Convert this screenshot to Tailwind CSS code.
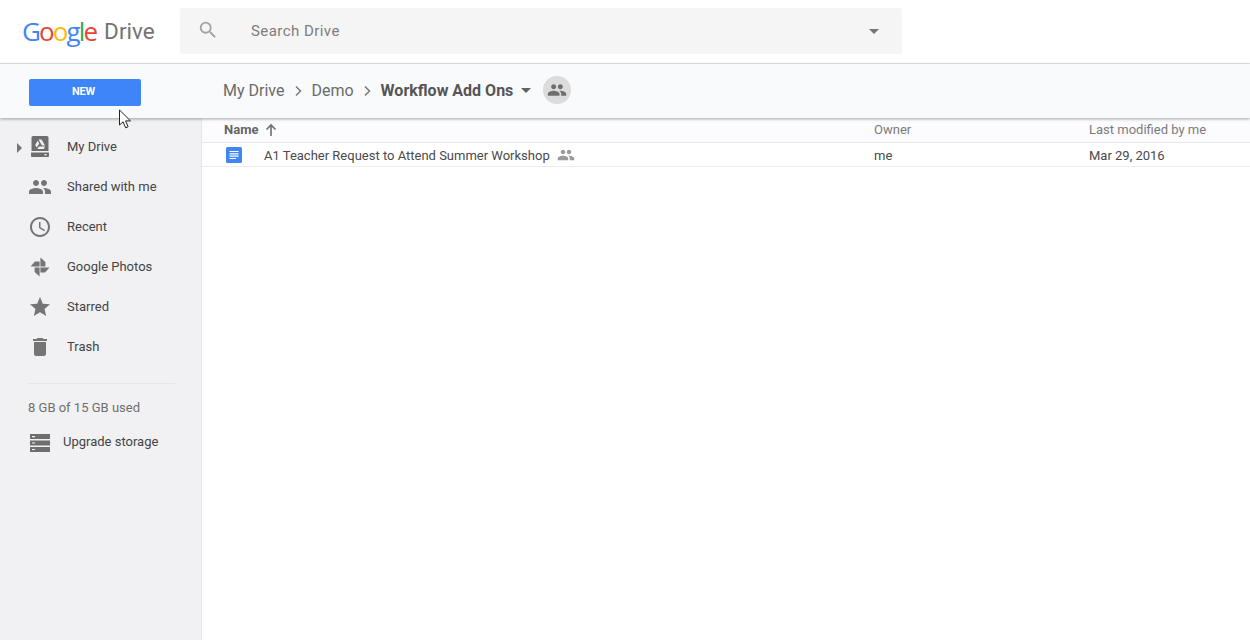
<!DOCTYPE html>
<html>
  <head>
    <meta name="viewport" content="width=device-width, initial-scale=1" />
    <title>Workflow Add Ons - Google Drive</title>
    <script src="https://cdn.jsdelivr.net/npm/@tailwindcss/browser@4"></script>
  </head>
  <body>
    <div class="relative w-[1250px] h-[640px] overflow-hidden bg-white flex flex-col font-['Roboto',sans-serif]">
      <!-- top bar -->
      <header class="h-[64px] shrink-0 flex items-center border-b border-[#e2e2e4] bg-white">
        <div class="w-[180px] pl-[22px] flex items-center h-full pb-[1px]">
          <span class="font-['Open_Sans',sans-serif] font-medium text-[26px] tracking-[-1.9px] leading-none">
            <span class="text-[#4285f4]">G</span><span class="text-[#ea4335]">o</span><span class="text-[#fbbc05]">o</span><span class="text-[#4285f4]">g</span><span class="text-[#34a853]">l</span><span class="text-[#ea4335]">e</span>
          </span>
          <span class="ml-[8px] text-[22.5px] text-[#737373] leading-none font-['Roboto',sans-serif]">Drive</span>
        </div>
        <div class="w-[722px] h-[46px] -mt-[1px] rounded-[3px] bg-[#f5f5f5] flex items-center pl-[17px] pr-[23px]">
          <svg class="w-[22px] h-[22px] -mt-[3px]" viewBox="0 0 24 24" fill="#a3a3a3"><path d="M15.5 14h-.79l-.28-.27A6.47 6.47 0 0 0 16 9.5 6.5 6.5 0 1 0 9.5 16c1.61 0 3.09-.59 4.23-1.57l.27.28v.79l5 4.99L20.49 19l-4.99-5zm-6 0C7.01 14 5 11.99 5 9.5S7.01 5 9.5 5 14 7.01 14 9.5 11.99 14 9.5 14z"/></svg>
          <span class="ml-[32px] mt-[1px] text-[15px] text-[#7d7d7d] tracking-[0.45px] flex-1">Search Drive</span>
          <span class="w-0 h-0 border-x-[5px] border-x-transparent border-t-[5px] border-t-[#757575]"></span>
        </div>
      </header>

      <!-- toolbar -->
      <div class="relative z-10 h-[54px] shrink-0 flex items-center bg-[#f9fafc] shadow-[0_1px_3px_rgba(0,0,0,0.35)]">
        <div class="w-[223px] pl-[29px] pt-[2px] shrink-0">
          <button class="w-[112px] h-[27px] pt-[1px] rounded-[2px] bg-[#3d85f9] text-white text-[11px] font-bold tracking-[-0.2px] pr-[3px]">NEW</button>
        </div>
        <div class="flex items-center text-[16px] text-[#6b6b6b] -mt-[1px]">
          <span>My Drive</span>
          <svg class="w-[18px] h-[18px] mx-[4.5px]" viewBox="0 0 18 18" fill="none" stroke="#7a7a7a" stroke-width="1.5"><path d="M7 4.5 11.5 9 7 13.5"/></svg>
          <span>Demo</span>
          <svg class="w-[18px] h-[18px] mx-[4.5px]" viewBox="0 0 18 18" fill="none" stroke="#7a7a7a" stroke-width="1.5"><path d="M7 4.5 11.5 9 7 13.5"/></svg>
          <span class="font-bold text-[#555555]">Workflow Add Ons</span>
          <span class="ml-[8px] w-0 h-0 border-x-[5px] border-x-transparent border-t-[5px] border-t-[#616161]"></span>
          <span class="ml-[12px] -mt-[1px] w-[28px] h-[28px] rounded-full bg-[#dcdcdc] flex items-center justify-center">
            <svg class="w-[20px] h-[20px]" viewBox="0 0 24 24" fill="#6e6e6e"><path d="M16 11c1.66 0 2.99-1.34 2.99-3S17.66 5 16 5s-3 1.34-3 3 1.34 3 3 3zm-8 0c1.66 0 2.99-1.34 2.99-3S9.66 5 8 5 5 6.34 5 8s1.34 3 3 3zm0 2c-2.33 0-7 1.17-7 3.5V19h14v-2.5C15 14.17 10.33 13 8 13zm8 0c-.29 0-.62.02-.97.05 1.16.84 1.97 1.97 1.97 3.45V19h6v-2.5c0-2.33-4.67-3.5-7-3.5z"/></svg>
          </span>
        </div>
      </div>

      <div class="flex-1 flex min-h-0">
        <!-- sidebar -->
        <aside class="w-[202px] shrink-0 bg-[#f1f1f3] border-r border-[#e6e6e8] pt-[9px] text-[13px] text-[#444444]">
          <nav class="flex flex-col">
            <div class="relative h-[40px] flex items-center pl-[67px]">
              <span class="absolute left-[17px] top-[16px] w-0 h-0 border-y-[5px] border-y-transparent border-l-[5px] border-l-[#757575]"></span>
              <svg class="absolute left-[28px] top-[8px] w-[24px] h-[24px]" viewBox="0 0 24 24"><path fill="#6e6e6e" d="M3.500 2.500A1.500 1.500 0 0 1 5 1h14a1.500 1.500 0 0 1 1.500 1.500V16h-17zM3 17.500h18V21a1 1 0 0 1-1 1H4a1 1 0 0 1-1-1z"/><path fill="#f1f1f3" d="M10.500 4.500h3l3.500 6h-3zM9.700 5.800 11.200 8.400 8.700 12.500 7.200 10zM9.700 13l1.500-1.500h6l-1.500 2.500h-6z"/><rect x="16.500" y="19" width="2" height="1.500" fill="#f1f1f3"/></svg>
              <span>My Drive</span>
            </div>
            <div class="relative h-[40px] flex items-center pl-[67px]">
              <svg class="absolute left-[28px] top-[8px] w-[24px] h-[24px]" viewBox="0 0 24 24" fill="#757575"><path d="M16 11c1.66 0 2.99-1.34 2.99-3S17.66 5 16 5s-3 1.34-3 3 1.34 3 3 3zm-8 0c1.66 0 2.99-1.34 2.99-3S9.660 5 8 5 5 6.340 5 8s1.340 3 3 3zm0 2c-2.330 0-7 1.170-7 3.500V19h14v-2.500C15 14.170 10.330 13 8 13zm8 0c-.29 0-.62.02-.97.05 1.160.84 1.970 1.970 1.970 3.450V19h6v-2.500c0-2.330-4.670-3.500-7-3.500z"/></svg>
              <span>Shared with me</span>
            </div>
            <div class="relative h-[40px] flex items-center pl-[67px]">
              <svg class="absolute left-[28px] top-[8px] w-[24px] h-[24px]" viewBox="0 0 24 24" fill="#757575"><path d="M11.990 2C6.470 2 2 6.480 2 12s4.470 10 9.990 10C17.520 22 22 17.520 22 12S17.520 2 11.990 2zM12 20c-4.420 0-8-3.580-8-8s3.580-8 8-8 8 3.580 8 8-3.580 8-8 8zm.5-13H11v6l5.250 3.150.75-1.230-4.500-2.670z"/></svg>
              <span>Recent</span>
            </div>
            <div class="relative h-[40px] flex items-center pl-[67px]">
              <svg class="absolute left-[28px] top-[8px] w-[24px] h-[24px]" viewBox="0 0 24 24" fill="#757575"><path d="M12.400 11.600V2.500l5 4.500v4.600zM12.400 12.400h9.100l-4.500 5h-4.600zM11.600 12.400v9.100l-5-4.500v-4.600zM11.600 11.600H2.500l4.500-5h4.600z"/></svg>
              <span>Google Photos</span>
            </div>
            <div class="relative h-[40px] flex items-center pl-[67px]">
              <svg class="absolute left-[28px] top-[8px] w-[24px] h-[24px]" viewBox="0 0 24 24" fill="#757575"><path d="M12 17.270 18.180 21l-1.640-7.030L22 9.240l-7.190-.61L12 2 9.190 8.630 2 9.240l5.460 4.730L5.820 21z"/></svg>
              <span>Starred</span>
            </div>
            <div class="relative h-[40px] flex items-center pl-[67px]">
              <svg class="absolute left-[28px] top-[8px] w-[24px] h-[24px]" viewBox="0 0 24 24" fill="#757575"><path d="M6 19c0 1.100.9 2 2 2h8c1.100 0 2-.9 2-2V7H6v12zM19 4h-3.500l-1-1h-5l-1 1H5v2h14V4z"/></svg>
              <span>Trash</span>
            </div>
          </nav>
          <div class="mt-[16px] mx-[28px] w-[147px] border-t border-[#e6e6e8]"></div>
          <p class="mt-[15px] pl-[28px] text-[#6f6f6f] leading-[18px]">8 GB of 15 GB used</p>
          <div class="relative mt-[8px] h-[34px] flex items-center pl-[63px]">
            <svg class="absolute left-[28px] top-[6px] w-[24px] h-[24px]" viewBox="0 0 24 24"><path fill="#6e6e6e" d="M2 3h20v5H2zM2 9.500h20v5H2zM2 16h20v5H2z"/><path fill="#f1f1f3" d="M4 5h3v1.200H4zM4 11.400h3v1.200H4zM4 17.900h3v1.200H4z"/></svg>
            <span class="-mt-[1px]">Upgrade storage</span>
          </div>
        </aside>

        <!-- file list -->
        <main class="flex-1 min-w-0 text-[13px]">
          <div class="h-[25px] flex items-center bg-[#fcfcfe] border-b border-[#e8e8ea] text-[#7b7b7b]">
            <div class="w-[672px] pl-[22px] flex items-center gap-[5px] font-bold text-[#666666]">
              <span>Name</span>
              <svg class="w-[16px] h-[16px]" viewBox="0 0 16 16" fill="none" stroke="#6e6e6e" stroke-width="1.600"><path d="M8 14V3M3.500 7.500 8 3l4.500 4.500"/></svg>
            </div>
            <div class="w-[215px]">Owner</div>
            <div>Last modified by me</div>
          </div>
          <div class="h-[24px] flex items-center border-b border-[#ededef] text-[#4a4a4a]">
            <div class="w-[672px] pl-[24px] flex items-center">
              <svg class="w-[16px] h-[16px] shrink-0" viewBox="0 0 16 16"><rect width="16" height="16" rx="1.500" fill="#4285f4"/><path fill="#fff" d="M3.500 4h9v1.100h-9zM3.500 6.300h9v1.100h-9zM3.500 8.600h9v1.100h-9zM3.500 10.900h6.500V12H3.500z"/></svg>
              <span class="ml-[22px] mt-[2px]">A1 Teacher Request to Attend Summer Workshop</span>
              <svg class="ml-[7px] w-[18px] h-[18px]" viewBox="0 0 24 24" fill="#9a9a9a"><path d="M16 11c1.660 0 2.990-1.340 2.990-3S17.660 5 16 5s-3 1.340-3 3 1.340 3 3 3zm-8 0c1.660 0 2.990-1.340 2.990-3S9.660 5 8 5 5 6.340 5 8s1.340 3 3 3zm0 2c-2.330 0-7 1.170-7 3.500V19h14v-2.500C15 14.170 10.330 13 8 13zm8 0c-.29 0-.62.02-.97.05 1.160.84 1.970 1.970 1.970 3.450V19h6v-2.500c0-2.330-4.670-3.500-7-3.500z"/></svg>
            </div>
            <div class="w-[215px] mt-[2px]">me</div>
            <div class="mt-[2px]">Mar 29, 2016</div>
          </div>
        </main>
      </div>

      <!-- mouse pointer -->
      <svg class="absolute left-[118px] top-[109px] z-20 w-[15px] h-[21px]" viewBox="0 0 15 21"><path d="M1.500 1v15l3.600-3.200 2.500 6 2.500-1-2.500-5.900h4.900z" fill="#fff" stroke="#222" stroke-width="1"/></svg>
    </div>
  </body>
</html>
